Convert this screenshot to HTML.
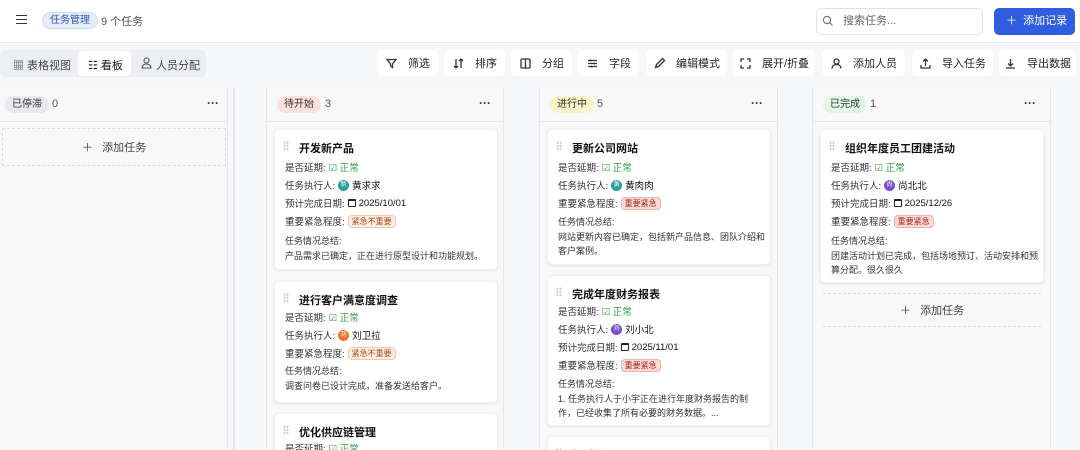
<!DOCTYPE html>
<html><head><meta charset="utf-8"><style>
*{box-sizing:border-box;margin:0;padding:0}
html,body{width:1080px;height:450px;overflow:hidden}
body{background:#f6f7f9;font-family:"Liberation Sans","Noto Sans CJK SC",sans-serif;color:#1f2329}
#w{position:relative;width:1080px;height:450px;overflow:hidden}
.a{position:absolute}
.hdr{left:0;top:0;width:1080px;height:43px;background:#fff;border-bottom:1px solid #e8eaed}
.btn{position:absolute;top:50px;height:26px;background:#fff;border-radius:5px;font-size:11px;display:flex;align-items:center;justify-content:center;gap:10px;color:#1f2329}
.btn svg{width:13px;height:13px;stroke:#333;fill:none;stroke-width:1.3}
.lane{position:absolute;top:88px;height:362px;background:#f8f8f9;border-left:1px solid #e6e7ea;border-right:1px solid #e6e7ea}
.lh{position:absolute;top:96px;height:17px;font-size:10px;border-radius:9px;padding:0 7px;line-height:17px}
.cnt{position:absolute;top:96px;font-size:11px;color:#555;line-height:17px}
.dots{position:absolute;top:96px;font-size:12px;font-weight:bold;color:#333}
.sep{position:absolute;top:121px;height:1px;background:#e6e7ea}
.card{position:absolute;background:#fff;border-radius:5px;box-shadow:0 1px 3px rgba(0,0,0,.08);border:1px solid #eef0f2;font-size:9.5px;color:#333;overflow:hidden}
.card .t{position:absolute;left:24px;top:10px;font-size:11px;font-weight:bold;color:#111}
.card .g{position:absolute;left:8px;top:11px;width:6px;height:10px;background:radial-gradient(circle,#ccc 1px,transparent 1.2px) 0 0/3px 3.3px}
.r{position:absolute;left:10px;white-space:nowrap;display:flex;align-items:center;gap:3px;height:14px}
.ok{color:#2f9e44;display:inline-flex;align-items:center;gap:3px}
.av{display:inline-block;width:11px;height:11px;border-radius:50%;color:#fff;font-size:6px;text-align:center;line-height:11px}
.tag{font-size:8px;border-radius:4px;padding:0 3px;line-height:11px;border:1px solid}
.t1{background:#fdeee4;color:#b0451e;border-color:#f5c7ad}
.t2{background:#f9dad6;color:#a3261b;border-color:#efb3ab}
.s{position:absolute;left:10px;right:5px;line-height:15px;font-size:9px}
.add{position:absolute;font-size:11px;color:#444;text-align:center;border-top:1px dashed #ddd;border-bottom:1px dashed #ddd}
.cal{display:inline-block;width:8px;height:8px;border:1.2px solid #222;border-top-width:2px;border-radius:1px;margin-right:3px;vertical-align:-1px}
</style></head><body><div id="w">
<div class="a hdr"></div>
<div class="a" style="left:16px;top:15px;width:11px;height:9px;border-top:1.5px solid #333;border-bottom:1.5px solid #333"><div style="margin-top:2.5px;height:1.5px;background:#333"></div></div>
<div class="a" style="left:42px;top:12px;height:17px;padding:0 7px;border-radius:9px;background:#e6eefc;border:1px solid #cfdcf5;color:#2c55b8;font-size:10px;line-height:15px">任务管理</div>
<div class="a" style="left:101px;top:13px;font-size:11px;color:#555">9 个任务</div>
<div class="a" style="left:816px;top:8px;width:167px;height:27px;border:1px solid #dfe1e5;border-radius:5px;background:#fff;font-size:11px;color:#666;padding-left:26px;line-height:25px">搜索任务...</div>
<svg class="a" style="left:822px;top:15px" width="12" height="12" viewBox="0 0 12 12" fill="none" stroke="#777" stroke-width="1.2"><circle cx="5" cy="5" r="3.6"/><path d="M7.8 7.8L10.5 10.5"/></svg>
<div class="a" style="left:994px;top:8px;width:81px;height:27px;background:#2f5fe0;border-radius:5px;color:#fff;font-size:11px;line-height:27px;padding-left:12px;white-space:nowrap">＋&nbsp; 添加记录</div>

<div class="a" style="left:0;top:50px;width:206px;height:27px;background:#eceef1;border-radius:5px"></div>
<div class="a" style="left:78px;top:51px;width:53px;height:25px;background:#fff;border-radius:4px"></div>
<div class="a" style="left:13px;top:57px;font-size:11px;color:#444">▦ 表格视图</div>
<div class="a" style="left:88px;top:57px;font-size:11px;color:#111">☷ 看板</div>
<svg class="a" style="left:141px;top:57px" width="11" height="12" viewBox="0 0 11 12" fill="none" stroke="#555" stroke-width="1.1"><circle cx="5.5" cy="3.5" r="2.5"/><path d="M1 11c0-2.5 2-4 4.5-4s4.5 1.5 4.5 4z"/></svg>
<div class="a" style="left:156px;top:57px;font-size:11px;color:#444">人员分配</div>

<div class="btn" style="left:377px;width:61px"><svg viewBox="0 0 13 13"><path d="M2 2.5h9L7.5 7v3.5L5.5 9V7z"/></svg>筛选</div>
<div class="btn" style="left:444px;width:61px"><svg viewBox="0 0 13 13"><path d="M4 2v9M2 9l2 2 2-2M9 11V2M7 4l2-2 2 2"/></svg>排序</div>
<div class="btn" style="left:511px;width:61px"><svg viewBox="0 0 13 13"><rect x="2" y="2" width="9" height="9" rx="1"/><path d="M6.5 2v9"/></svg>分组</div>
<div class="btn" style="left:578px;width:61px"><svg viewBox="0 0 13 13"><path d="M2 3.5h9M2 6.5h9M2 9.5h9M4.5 2.5v2M8.5 5.5v2M5.5 8.5v2"/></svg>字段</div>
<div class="btn" style="left:646px;width:81px"><svg viewBox="0 0 13 13"><path d="M2.5 10.5l1-3 6-6 2 2-6 6z"/></svg>编辑模式</div>
<div class="btn" style="left:733px;width:82px"><svg viewBox="0 0 13 13"><path d="M2 5V2h3M8 2h3v3M11 8v3H8M5 11H2V8"/></svg>展开/折叠</div>
<div class="btn" style="left:822px;width:83px"><svg viewBox="0 0 13 13"><circle cx="6.5" cy="4.5" r="2.5"/><path d="M2 11.5c0-2.5 2-4 4.5-4s4.5 1.5 4.5 4"/></svg>添加人员</div>
<div class="btn" style="left:912px;width:81px"><svg viewBox="0 0 13 13"><path d="M6.5 9V2M4 4.5l2.5-2.5 2.5 2.5M2 8v3h9V8"/></svg>导入任务</div>
<div class="btn" style="left:999px;width:77px"><svg viewBox="0 0 13 13"><path d="M6.5 2v7M4 6.5l2.5 2.5 2.5-2.5M2 11h9"/></svg>导出数据</div>

<div class="lane" style="left:-1px;width:229px"></div>
<div class="lane" style="left:233px;width:1px;background:#eee"></div>
<div class="lane" style="left:266px;width:238px"></div>
<div class="lane" style="left:539px;width:239px"></div>
<div class="lane" style="left:812px;width:239px"></div>

<div class="lh" style="left:5px;background:#e8e9ec;color:#333">已停滞</div><div class="cnt" style="left:52px">0</div><div class="dots" style="left:207px">···</div>
<div class="lh" style="left:277px;background:#fbe1dc;color:#333">待开始</div><div class="cnt" style="left:325px">3</div><div class="dots" style="left:479px">···</div>
<div class="lh" style="left:550px;background:#fdf2c8;color:#333">进行中</div><div class="cnt" style="left:597px">5</div><div class="dots" style="left:751px">···</div>
<div class="lh" style="left:823px;background:#e2f6e6;color:#333">已完成</div><div class="cnt" style="left:870px">1</div><div class="dots" style="left:1024px">···</div>
<div class="sep" style="left:0;width:228px"></div><div class="sep" style="left:266px;width:238px"></div><div class="sep" style="left:539px;width:239px"></div><div class="sep" style="left:812px;width:239px"></div>

<div class="add" style="left:2px;top:128px;width:224px;height:38px;line-height:38px;border:1px dashed #ddd">＋&nbsp;&nbsp; 添加任务</div>

<div class="card" style="left:274px;top:129px;width:224px;height:141px"><div class="g"></div><div class="t">开发新产品</div>
<div class="r" style="top:30px">是否延期: <span class="ok">☑ 正常</span></div>
<div class="r" style="top:48px">任务执行人: <span class="av" style="background:#2aa198">新</span> <span style="color:#111">黄求求</span></div>
<div class="r" style="top:66px">预计完成日期: <span style="color:#111"><i class="cal"></i>2025/10/01</span></div>
<div class="r" style="top:84px">重要紧急程度: <span class="tag t1">紧急不重要</span></div>
<div class="s" style="top:104px">任务情况总结:<br>产品需求已确定，正在进行原型设计和功能规划。</div></div>

<div class="card" style="left:274px;top:281px;width:224px;height:122px"><div class="g"></div><div class="t">进行客户满意度调查</div>
<div class="r" style="top:28px">是否延期: <span class="ok">☑ 正常</span></div>
<div class="r" style="top:46px">任务执行人: <span class="av" style="background:#e8772e">刘</span> <span style="color:#111">刘卫拉</span></div>
<div class="r" style="top:64px">重要紧急程度: <span class="tag t1">紧急不重要</span></div>
<div class="s" style="top:82px">任务情况总结:<br>调查问卷已设计完成，准备发送给客户。</div></div>

<div class="card" style="left:274px;top:413px;width:224px;height:60px"><div class="g"></div><div class="t">优化供应链管理</div>
<div class="r" style="top:27px">是否延期: <span class="ok">☑ 正常</span></div></div>

<div class="card" style="left:547px;top:129px;width:224px;height:136px"><div class="g"></div><div class="t">更新公司网站</div>
<div class="r" style="top:30px">是否延期: <span class="ok">☑ 正常</span></div>
<div class="r" style="top:48px">任务执行人: <span class="av" style="background:#2aa198">黄</span> <span style="color:#111">黄肉肉</span></div>
<div class="r" style="top:66px">重要紧急程度: <span class="tag t2">重要紧急</span></div>
<div class="s" style="top:85px;line-height:14.5px">任务情况总结:<br>网站更新内容已确定，包括新产品信息、团队介绍和客户案例。</div></div>

<div class="card" style="left:547px;top:275px;width:224px;height:151px"><div class="g"></div><div class="t">完成年度财务报表</div>
<div class="r" style="top:28px">是否延期: <span class="ok">☑ 正常</span></div>
<div class="r" style="top:46px">任务执行人: <span class="av" style="background:#7b4fd0">刘</span> <span style="color:#111">刘小北</span></div>
<div class="r" style="top:64px">预计完成日期: <span style="color:#111"><i class="cal"></i>2025/11/01</span></div>
<div class="r" style="top:82px">重要紧急程度: <span class="tag t2">重要紧急</span></div>
<div class="s" style="top:101px;line-height:14.5px">任务情况总结:<br>1. 任务执行人于小宇正在进行年度财务报告的制作，已经收集了所有必要的财务数据。...</div></div>

<div class="card" style="left:547px;top:436px;width:224px;height:14px;border-bottom:none;border-radius:5px 5px 0 0"><div class="g"></div><div class="t">招聘新员工</div></div>

<div class="card" style="left:820px;top:129px;width:224px;height:154px"><div class="g"></div><div class="t">组织年度员工团建活动</div>
<div class="r" style="top:30px">是否延期: <span class="ok">☑ 正常</span></div>
<div class="r" style="top:48px">任务执行人: <span class="av" style="background:#7b4fd0">尚</span> <span style="color:#111">尚北北</span></div>
<div class="r" style="top:66px">预计完成日期: <span style="color:#111"><i class="cal"></i>2025/12/26</span></div>
<div class="r" style="top:84px">重要紧急程度: <span class="tag t2">重要紧急</span></div>
<div class="s" style="top:104px;line-height:14.5px">任务情况总结:<br>团建活动计划已完成，包括场地预订、活动安排和预算分配。很久很久</div></div>
<div class="add" style="left:823px;top:293px;width:218px;height:34px;line-height:34px">＋&nbsp;&nbsp; 添加任务</div>
</div></body></html>
